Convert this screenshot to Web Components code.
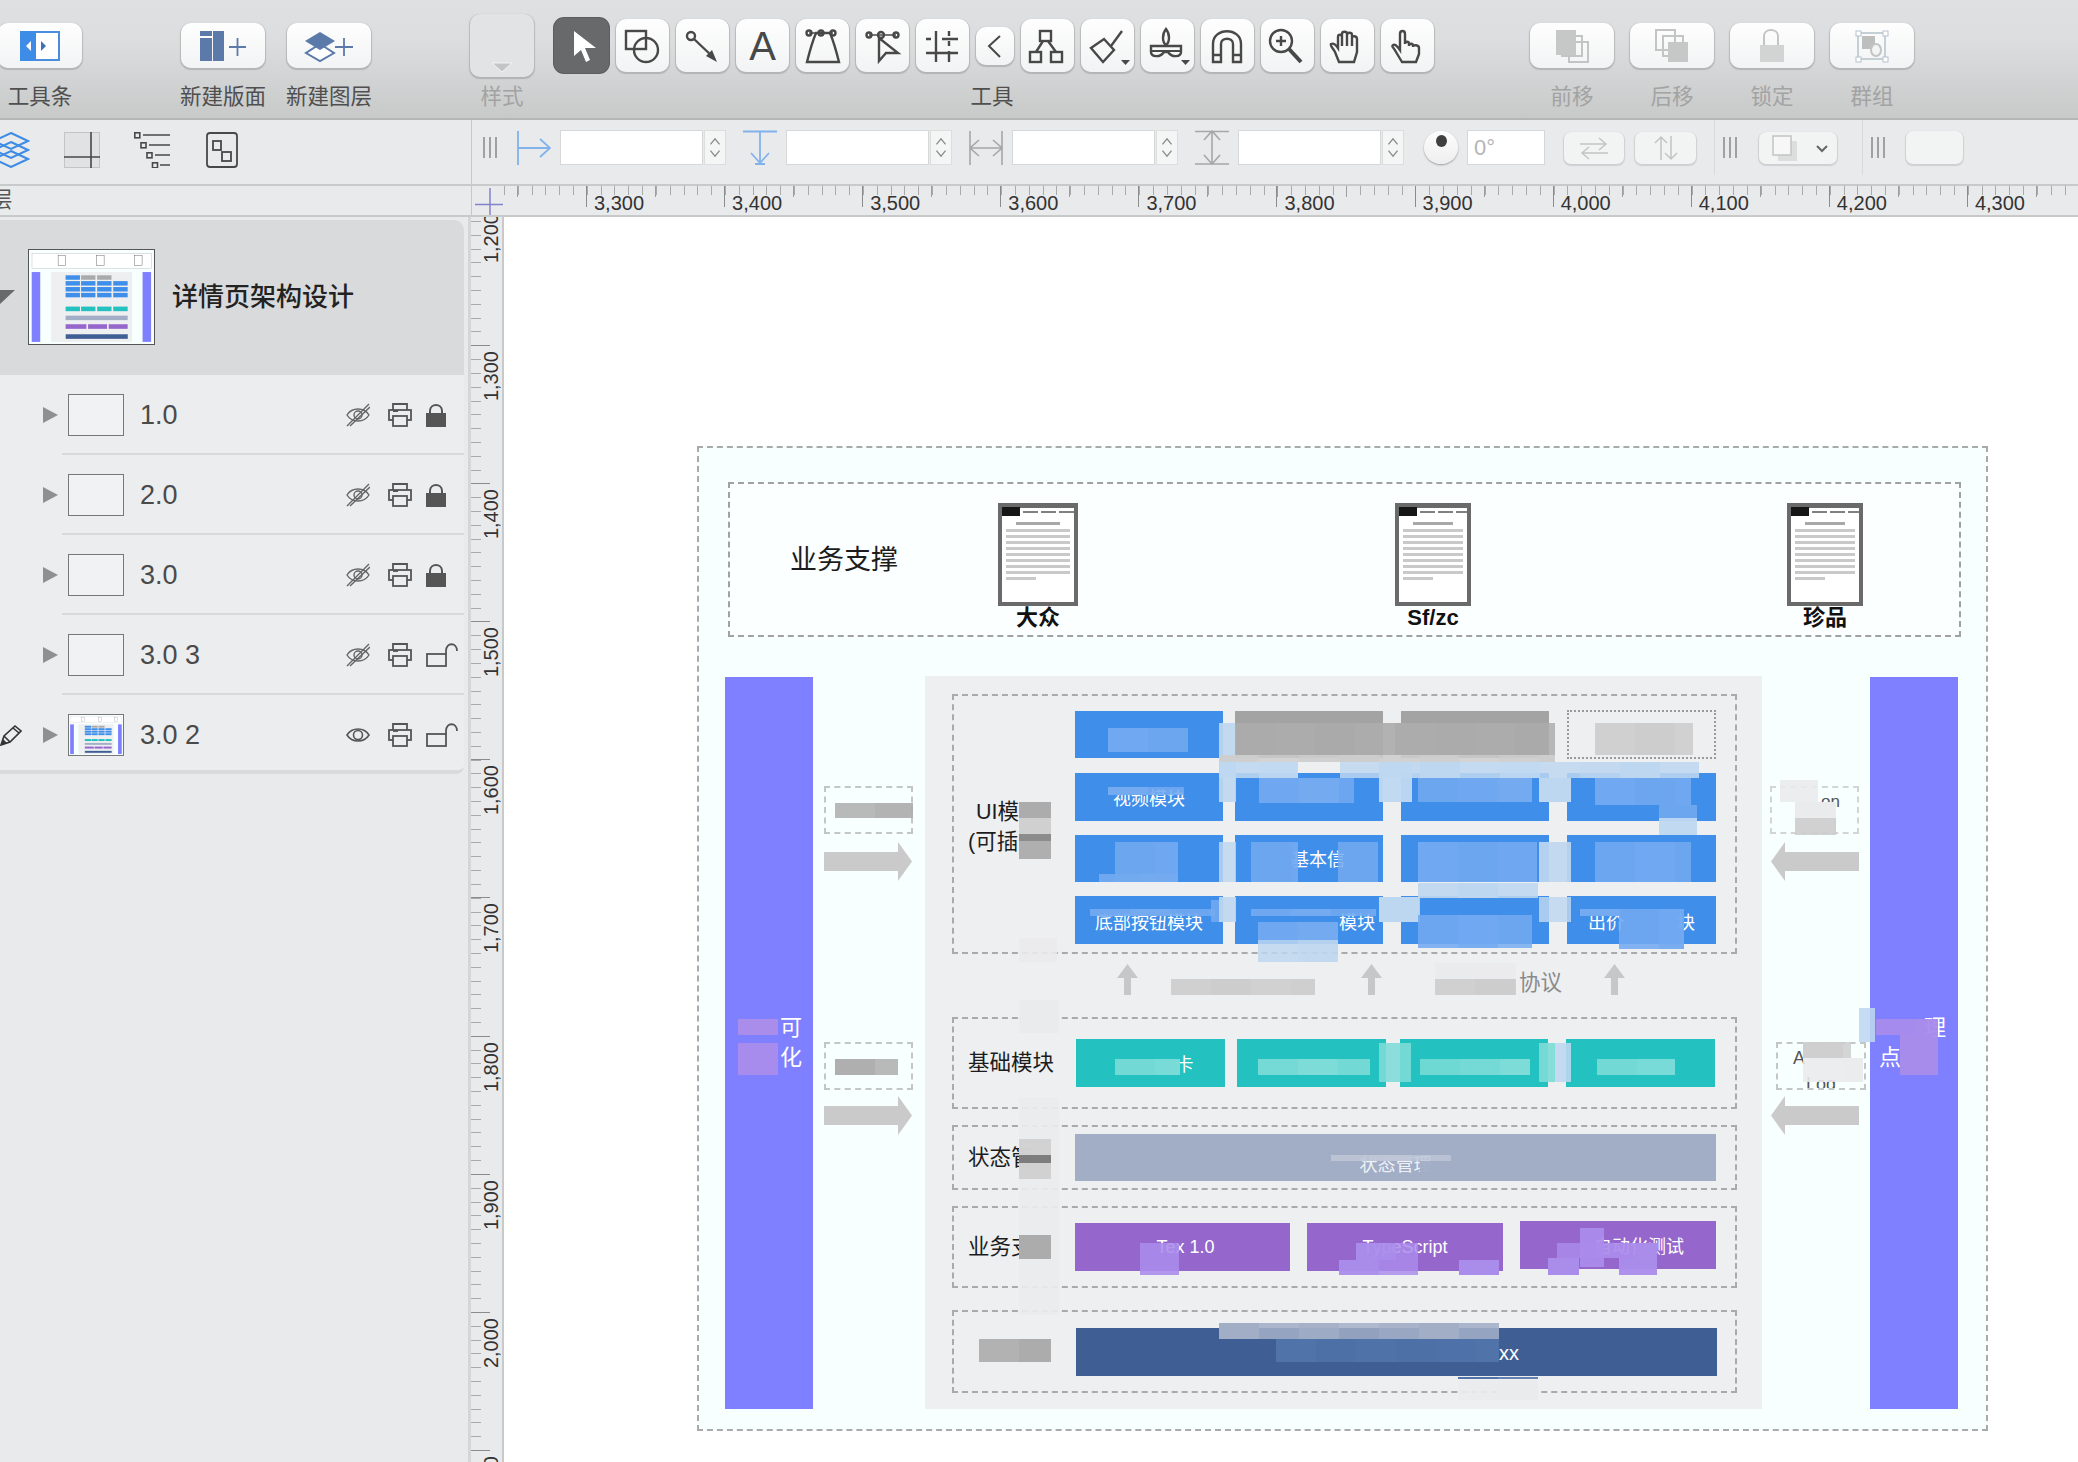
<!DOCTYPE html>
<html>
<head>
<meta charset="utf-8">
<title>架构设计</title>
<style>
  html, body { margin: 0; padding: 0; width: 2078px; height: 1462px; overflow: hidden; background: #fff; }
  body { font-family: "Liberation Sans", "Noto Sans CJK SC", sans-serif; }
</style>
</head>
<body>
<app-window></app-window>
<script>
const FONT = `"Liberation Sans", "Noto Sans CJK SC", sans-serif`;
const INK = 'fill="none" stroke="#484848" stroke-width="2.4"';
const PALE = 'fill="none" stroke="#c3c4c4" stroke-width="2"';

function icon(box, body, w, h) {
    return `<svg xmlns="http://www.w3.org/2000/svg" viewBox="${box}" width="${w}" height="${h}" style="display:block">${body}</svg>`;
}

function thumbnail(w, h) {
    let cells = '';
    const blue = [[378, 148], [538, 148], [704, 148], [870, 149]];
    [265, 326, 388, 449].forEach((y, r) => blue.forEach(([x, cw], c) => {
        const fill = r === 0 && (c === 1 || c === 2) ? '#aaa' : r === 0 && c === 3 ? '#eee' : '#3f8ee9';
        cells += `<rect x="${x}" y="${y}" width="${cw}" height="47" fill="${fill}"/>`;
        if (r === 0) cells += `<rect x="${x}" y="593" width="${cw}" height="48" fill="#24c1c1"/>`;
    }));
    [0, 397, 789].forEach((x) => {
        cells += `<rect x="${301 + x}" y="57" width="78" height="103" fill="#fff" stroke="#666" stroke-width="5"/>`;
    });
    return `<svg xmlns="http://www.w3.org/2000/svg" viewBox="0 0 1291 985" width="${w}" height="${h}" preserveAspectRatio="none" style="display:block">
        <rect width="1291" height="985" fill="#f7ffff"/>
        <rect x="31" y="36" width="1233" height="155" fill="#fff" stroke="#999" stroke-width="3"/>
        <rect x="28" y="231" width="88" height="732" fill="#7f80ff"/>
        <rect x="1173" y="231" width="88" height="732" fill="#7f80ff"/>
        <rect x="228" y="230" width="837" height="733" fill="#eeeff1"/>
        <rect x="378" y="688" width="641" height="47" fill="#a2aec6"/>
        <rect x="378" y="778" width="215" height="48" fill="#9566cc"/>
        <rect x="610" y="778" width="196" height="48" fill="#9566cc"/>
        <rect x="823" y="778" width="196" height="48" fill="#9566cc"/>
        <rect x="379" y="883" width="641" height="48" fill="#3f5e94"/>
        ${cells}</svg>`;
}

class ToolGroup extends HTMLElement {
    constructor() {
        super();
        this._shadowRoot = this.attachShadow({ mode: 'open' });
    }

    connectedCallback() {
        const muted = this.hasAttribute('muted');
        this._shadowRoot.innerHTML = `
            <style>
                :host { display: flex; flex-direction: column; align-items: center; flex: none; padding-top: 4px; }
                .btns { height: 83px; display: flex; align-items: center; gap: 7px; }
                .label { font-size: 21.5px; line-height: 20px; white-space: nowrap; margin: 0 -10px; color: ${muted ? '#a2a3a3' : '#4f4f4f'}; }
            </style>
            <div class="btns"><slot></slot></div>
            <div class="label" style="${this.getAttribute('label-style') || ''}">${this.getAttribute('label')}</div>`;
    }
}

class ToolButton extends HTMLElement {
    constructor() {
        super();
        this._shadowRoot = this.attachShadow({ mode: 'open' });
    }

    connectedCallback() {
        const w = this.getAttribute('w') || 53;
        const h = this.getAttribute('h') || 53;
        const state = this.getAttribute('state');
        const bg = state === 'on' ? '#68696b' : state === 'ghost' ? '#e2e3e4'
            : 'linear-gradient(#fefefe, #f2f3f4)';
        const shadow = state === 'on' ? '0 0 0 1px #5c5d5f' : '0 1px 1px 1px rgba(120,120,120,.35)';
        this._shadowRoot.innerHTML = `
            <style>
                :host { display: flex; flex: none; width: ${w}px; height: ${h}px; box-sizing: border-box; border-radius: 10px;
                    background: ${bg}; box-shadow: ${shadow}; align-items: center; justify-content: center; overflow: hidden; }
            </style>
            <slot></slot>`;
    }
}

class AppToolbar extends HTMLElement {
    constructor() {
        super();
        this._shadowRoot = this.attachShadow({ mode: 'open' });
    }

    connectedCallback() {
        this._shadowRoot.innerHTML = `
            <style>
                :host { display: flex; height: 120px; box-sizing: border-box; border-bottom: 2px solid #b4b5b5;
                    background: linear-gradient(#dfe0e1, #dcddde 35%, #c8c9c9); font-family: ${FONT}; }
                .letter { font-size: 40px; line-height: 40px; color: #484848; font-weight: 400; }
            </style>
            <tool-group label="工具条" style="margin-left:-2px">
                <tool-button w="84" h="45">${icon('-2 23 84 45', `
                    <rect x="21" y="32" width="38" height="28" fill="#fff" stroke="#4a8ddc" stroke-width="2"/>
                    <rect x="20" y="31" width="16" height="30" fill="#3d8ce6"/>
                    <path d="M31 41 l-5 5 5 5z" fill="#fff"/><path d="M41 41 l5 5 -5 5z" fill="#3d72b8"/>`, 84, 45)}</tool-button>
            </tool-group>
            <tool-group label="新建版面" style="margin-left:99px">
                <tool-button w="84" h="45">${icon('181 23 84 45', `
                    <rect x="200" y="31" width="12" height="5" fill="#5b7aa9"/><rect x="200" y="38" width="12" height="23" fill="#5b7aa9"/>
                    <rect x="213" y="31" width="11" height="30" fill="#5b7aa9"/>
                    <path d="M237.500 38 V56 M229 47 H246" stroke="#5b7aa9" stroke-width="1.8"/>`, 84, 45)}</tool-button>
            </tool-group>
            <tool-group label="新建图层" style="margin-left:22px">
                <tool-button w="84" h="45">${icon('287 23 84 45', `
                    <path d="M320 44 L334 53 L320 61 L306 53Z" fill="#fff" stroke="#5b7aa9" stroke-width="2"/>
                    <path d="M320 32 L335 41 L320 50 L305 41Z" fill="#5b7aa9"/>
                    <path d="M344 38 V56 M335 47 H353" stroke="#5b7aa9" stroke-width="1.8"/>`, 84, 45)}</tool-button>
            </tool-group>
            <tool-group label="样式" muted style="margin-left:99px">
                <tool-button w="64" h="63" state="ghost">${icon('470 14 64 63', `
                    <path d="M492 63 h20 l-10 9z" fill="#c3c4c4" stroke="#f4f4f4"/>`, 64, 63)}</tool-button>
            </tool-group>
            <tool-group label="工具" label-style="margin-right:-6px" style="margin-left:20px">
                <tool-button w="55" h="55" state="on">${icon('554 18 55 55', `
                    <path d="M574 31 V56 L581 50 L586 62 L590 60 L585 48 L596 48Z" fill="#fff"/>`, 55, 55)}</tool-button>
                <tool-button>${icon('616 19 53 53', `
                    <rect x="626" y="31" width="20" height="18" ${INK}/><ellipse cx="646" cy="50" rx="12" ry="12" ${INK}/>`, 53, 53)}</tool-button>
                <tool-button>${icon('676 19 53 53', `
                    <circle cx="691" cy="36" r="4" ${INK}/><path d="M694 39 L713 57" ${INK}/><path d="M717 62 L706 56 L712 50Z" fill="#484848"/>`, 53, 53)}</tool-button>
                <tool-button><span class="letter">A</span></tool-button>
                <tool-button>${icon('796 19 53 53', `
                    <path d="M807 62 C810 50 813 40 816 33 H830 C833 40 836 50 839 62Z" ${INK}/>
                    <path d="M809 33 H833" stroke="#484848" stroke-width="1.6"/>
                    <circle cx="809" cy="33" r="2.5" ${INK}/><circle cx="821" cy="33" r="2.5" ${INK}/><circle cx="833" cy="33" r="2.5" ${INK}/>`, 53, 53)}</tool-button>
                <tool-button>${icon('856 19 53 53', `
                    <path d="M869 35 H896" stroke="#484848" stroke-width="1.6"/>
                    <circle cx="869" cy="35" r="2.5" ${INK}/><circle cx="881" cy="35" r="3" ${INK}/><circle cx="896" cy="35" r="2.5" ${INK}/>
                    <path d="M879 38 V61 L886 53 H898Z" ${INK}/>`, 53, 53)}</tool-button>
                <tool-button>${icon('916 19 53 53', `
                    <path d="M936 31 V62 M949 31 V36 M949 41 V46 M949 51 V62 M926 39 H931 M942 39 H958 M926 53 H958" ${INK}/>`, 53, 53)}</tool-button>
                <tool-button w="38" h="38">${icon('976 27 38 38', `
                    <path d="M1000 36 L989 46 L1000 57" fill="none" stroke="#484848" stroke-width="2"/>`, 38, 38)}</tool-button>
                <tool-button>${icon('1021 19 53 53', `
                    <rect x="1040" y="31" width="11" height="10" ${INK}/><rect x="1030" y="52" width="11" height="10" ${INK}/><rect x="1051" y="52" width="11" height="10" ${INK}/>
                    <path d="M1043 41 L1036 52 M1048 41 L1056 52" ${INK}/>`, 53, 53)}</tool-button>
                <tool-button>${icon('1081 19 53 53', `
                    <path d="M1122 31 L1111 46" ${INK}/><path d="M1091 48 L1104 39 L1114 50 L1103 62Z" ${INK}/>
                    <path d="M1121 60 H1130 L1125.500 65Z" fill="#484848"/>`, 53, 53)}</tool-button>
                <tool-button>${icon('1141 19 53 53', `
                    <path d="M1166 29 C1170 34 1170 42 1166 45 C1162 42 1162 34 1166 29Z" ${INK}/>
                    <path d="M1151 46 H1181 V52 C1181 57 1172 58 1168 52 H1164 C1160 58 1151 57 1151 52Z" ${INK}/><path d="M1151 51 H1181" stroke="#484848" stroke-width="2"/>
                    <path d="M1181 60 H1190 L1185.500 65Z" fill="#484848"/>`, 53, 53)}</tool-button>
                <tool-button>${icon('1201 19 53 53', `
                    <path d="M1213 62 V44 C1213 27 1241 27 1241 44 V62 H1233 V44 C1233 37 1221 37 1221 44 V62Z M1213 55 H1221 M1233 55 H1241" ${INK}/>`, 53, 53)}</tool-button>
                <tool-button>${icon('1261 19 53 53', `
                    <ellipse cx="1281" cy="41" rx="11" ry="11" ${INK}/><path d="M1281 36 V46 M1276 41 H1286" ${INK}/>
                    <path d="M1289 49 L1301 62" fill="none" stroke="#484848" stroke-width="4"/>`, 53, 53)}</tool-button>
                <tool-button>${icon('1321 19 53 53', `
                    <path d="M1339 62 L1335 52 C1333 48 1330 46 1331 44 C1333 43 1336 45 1338 48 V37 C1338 34 1342 34 1342 37 V34 C1342 31 1347 31 1347 34 V35 C1347 32 1352 32 1352 35 V38 C1352 35 1357 36 1357 39 V52 L1354 62Z M1342 37 V46 M1347 35 V46 M1352 38 V46" ${INK}/>`, 53, 53)}</tool-button>
                <tool-button>${icon('1381 19 53 53', `
                    <path d="M1402 62 L1396 52 C1394 48 1391 46 1393 45 C1395 44 1398 47 1400 50 V34 C1400 30 1405 30 1405 34 V44 C1405 41 1409 41 1409 44 V46 C1409 43 1413 43 1413 46 V47 C1413 44 1419 45 1419 48 V54 L1416 62Z" ${INK}/>`, 53, 53)}</tool-button>
            </tool-group>
            <tool-group label="前移" muted style="margin-left:96px">
                <tool-button w="84" h="45">${icon('1530 23 84 45', `
                    <rect x="1569" y="42" width="19" height="20" ${PALE}/><rect x="1562" y="36" width="20" height="20" ${PALE}/>
                    <rect x="1556" y="30" width="20" height="25" fill="#c6c7c7"/>`, 84, 45)}</tool-button>
            </tool-group>
            <tool-group label="后移" muted style="margin-left:16px">
                <tool-button w="84" h="45">${icon('1630 23 84 45', `
                    <rect x="1656" y="30" width="19" height="20" ${PALE}/><rect x="1663" y="36" width="20" height="20" ${PALE}/>
                    <rect x="1668" y="42" width="20" height="20" fill="#c6c7c7"/>`, 84, 45)}</tool-button>
            </tool-group>
            <tool-group label="锁定" muted style="margin-left:16px">
                <tool-button w="84" h="45">${icon('1730 23 84 45', `
                    <path d="M1764 46 V36 C1764 28 1778 28 1778 36 V46" ${PALE}/><rect x="1760" y="45" width="24" height="17" fill="#d2d3d3"/>`, 84, 45)}</tool-button>
            </tool-group>
            <tool-group label="群组" muted style="margin-left:16px">
                <tool-button w="84" h="45">${icon('1830 23 84 45', `
                    <rect x="1858" y="33" width="27" height="26" fill="none" stroke="#c5cfd6" stroke-width="2"/>
                    <rect x="1856" y="31" width="5" height="5" fill="#fff" stroke="#b5c2cc"/><rect x="1883" y="31" width="5" height="5" fill="#fff" stroke="#b5c2cc"/>
                    <rect x="1856" y="57" width="5" height="5" fill="#fff" stroke="#b5c2cc"/><rect x="1883" y="57" width="5" height="5" fill="#fff" stroke="#b5c2cc"/>
                    <rect x="1862" y="36" width="13" height="13" fill="#bdbebe"/><ellipse cx="1876" cy="50" rx="5" ry="6" fill="#f4f4f4" stroke="#c3c4c4" stroke-width="2"/>`, 84, 45)}</tool-button>
            </tool-group>`;
    }
}

class NumField extends HTMLElement {
    constructor() {
        super();
        this._shadowRoot = this.attachShadow({ mode: 'open' });
    }

    connectedCallback() {
        this._shadowRoot.innerHTML = `
            <style>
                :host { display: flex; flex: none; align-items: center; height: 35px; margin-right: 17px; }
                .icon { width: 34px; height: 35px; margin-right: 9px; }
                .box { width: 143px; height: 35px; box-sizing: border-box; background: #fff; border: 1px solid #d6d7d8; margin-right: 1px; }
                .step { width: 22px; height: 35px; box-sizing: border-box; background: #f4f5f5; border: 1px solid #dcdddd; }
            </style>
            <div class="icon"><slot></slot></div>
            <div class="box"></div>
            <div class="step">${icon('0 0 22 35', `<path d="M6 14 L11 8 L16 14 M6 21 L11 27 L16 21" fill="none" stroke="#8a8b8b" stroke-width="1.4"/>`, 20, 33)}</div>`;
    }
}

class FormatBar extends HTMLElement {
    constructor() {
        super();
        this._shadowRoot = this.attachShadow({ mode: 'open' });
    }

    connectedCallback() {
        const grips = `<svg width="14" height="21" style="display:block;flex:none"><path d="M1 0 V21 M7 0 V21 M13 0 V21" stroke="#6f7070" stroke-width="1.2"/></svg>`;
        this._shadowRoot.innerHTML = `
            <style>
                :host { display: flex; height: 66px; box-sizing: border-box; background: #e9eaeb; border-bottom: 2px solid #c8c9c9; font-family: ${FONT}; }
                .tabs { width: 472px; flex: none; display: flex; align-items: flex-start; padding-top: 12px; box-sizing: border-box; border-right: 1px solid #c6c7c7; }
                .tabs > * { flex: none; }
                .tools { display: flex; align-items: center; height: 35px; margin-top: 10px; padding-left: 11px; flex: 1; }
                .tools > * { flex: none; }
                .rot { width: 34px; height: 33px; border-radius: 50%; background: linear-gradient(#fdfdfd, #eeeeee); box-shadow: 0 1px 2px rgba(0,0,0,.35); margin-right: 9px; display: flex; justify-content: center; }
                .rot i { width: 11px; height: 12px; margin-top: 4px; border-radius: 50%; background: #3f3f3f; }
                .deg { width: 78px; height: 35px; box-sizing: border-box; background: #fff; border: 1px solid #d6d7d8; color: #b4b5b5; font-size: 22px; line-height: 33px; padding-left: 6px; margin-right: 19px; }
                .btn { height: 32px; box-sizing: border-box; border-radius: 7px; background: #f2f3f3; box-shadow: 0 1px 1px 1px rgba(150,150,150,.3); display: flex; align-items: center; justify-content: center; }
                .div { width: 1px; height: 55px; background: #d9dada; }
            </style>
            <div class="tabs">
                ${icon('-7 132 37 36', `<g fill="none" stroke="#3d8ce6" stroke-width="2"><path d="M11 133 L28 141 L11 149 L-6 141Z"/><path d="M11 142 L28 150 L11 158 L-6 150Z"/><path d="M11 151 L28 159 L11 167 L-6 159Z"/></g>`, 37, 36).replace('display:block', 'display:block;margin-left:-7px')}
                ${icon('64 132 36 36', `<rect x="64.500" y="132.500" width="35" height="35" fill="#e1e2e3" stroke="#c4c5c6"/><path d="M91 132 V168 M64 157 H100" stroke="#484848" stroke-width="1.6"/>`, 36, 36).replace('display:block', 'display:block;margin-left:34px')}
                ${icon('134 132 36 36', `<g fill="none" stroke="#484848" stroke-width="1.6"><rect x="134.800" y="132.800" width="5" height="5"/><rect x="141" y="142.800" width="5" height="5"/><rect x="147" y="152.800" width="5" height="5"/><rect x="152.500" y="162.800" width="5" height="5"/><path d="M143 135 H170 M149 145 H170 M155 155 H170 M160 165 H170"/></g>`, 36, 36).replace('display:block', 'display:block;margin-left:34px')}
                ${icon('206 132 32 36', `<g fill="none" stroke="#484848" stroke-width="1.8"><rect x="207" y="133" width="30" height="34" rx="3"/><rect x="213" y="141" width="8" height="9"/><rect x="222" y="152" width="9" height="9"/></g>`, 32, 36).replace('display:block', 'display:block;margin-left:36px')}
            </div>
            <div class="tools">
                <span style="margin-right:20px">${grips}</span>
                <num-field>${icon('516 130 34 35', `<path d="M517 131 V165 M517 148 H549 M539 139 L549 148 L539 157" fill="none" stroke="#82b2ec" stroke-width="1.8"/>`, 34, 35)}</num-field>
                <num-field>${icon('742 130 34 35', `<path d="M742 131.500 H776 M759 131 V163 M750 153 L759 163 L768 153 M754 164 H764" fill="none" stroke="#82b2ec" stroke-width="1.8"/>`, 34, 35)}</num-field>
                <num-field>${icon('968 130 34 35', `<path d="M969 131 V165 M1001 131 V165 M969 148 H1001 M978 140 L969 148 L978 156 M992 140 L1001 148 L992 156" fill="none" stroke="#a6a7a7" stroke-width="1.6"/>`, 34, 35)}</num-field>
                <num-field>${icon('1194 130 34 35', `<path d="M1194 131.500 H1228 M1194 164 H1228 M1211 131 V164 M1203 140 L1211 131 L1219 140 M1203 155 L1211 164 L1219 155" fill="none" stroke="#a6a7a7" stroke-width="1.6"/>`, 34, 35)}</num-field>
                <div class="rot" style="margin-left:3px"><i></i></div>
                <div class="deg">0°</div>
                <div class="btn" style="width:60px;margin-right:11px">${icon('0 0 40 26', `<path d="M6 9 H32 M25 3 L32 9 L25 15 M34 18 H8 M15 12 L8 18 L15 24" fill="none" stroke="#c3c4c4" stroke-width="1.5"/>`, 40, 26)}</div>
                <div class="btn" style="width:61px;margin-right:18px">${icon('0 0 34 26', `<path d="M12 25 V2 M6 8 L12 2 L18 8 M22 1 V24 M16 18 L22 24 L28 18" fill="none" stroke="#c3c4c4" stroke-width="1.5"/>`, 34, 26)}</div>
                <div class="div"></div>
                <span style="margin:0 22px 0 8px">${grips}</span>
                <div class="btn" style="width:78px;margin-right:25px">${icon('0 0 78 32', `<rect x="19" y="9" width="19" height="20" fill="#dcdddd"/><rect x="14" y="4" width="18" height="19" fill="#f7f7f7" stroke="#c3c4c4" stroke-width="1.500"/><path d="M58 14 L63 19 L68 14" fill="none" stroke="#666" stroke-width="2"/>`, 78, 32)}</div>
                <div class="div"></div>
                <span style="margin:0 21px 0 8px">${grips}</span>
                <div class="btn" style="width:57px;height:33px"></div>
            </div>`;
    }
}

class RulerRow extends HTMLElement {
    constructor() {
        super();
        this._shadowRoot = this.attachShadow({ mode: 'open' });
    }

    connectedCallback() {
        const marks = ['3,300', '3,400', '3,500', '3,600', '3,700', '3,800', '3,900', '4,000', '4,100', '4,200', '4,300']
            .map((t) => `<div class="seg"><span>${t}</span></div>`).join('');
        this._shadowRoot.innerHTML = `
            <style>
                :host { display: flex; height: 31px; box-sizing: border-box; background: #e9eaeb; border-bottom: 2px solid #c8c9c9; font-family: ${FONT}; overflow: hidden; }
                .title { width: 472px; flex: none; box-sizing: border-box; font-size: 21.5px; line-height: 29px; color: #555; overflow: hidden; border-right: 1px solid #c6c7c7; }
                .title span { display: block; margin-left: -9px; }
                .corner { width: 32px; flex: none; }
                .track { flex: 1; display: flex; overflow: hidden; padding-left: 82px;
                    background:
                        repeating-linear-gradient(90deg, #9d9e9e 0 1px, transparent 1px 69.05px) 13px 0 / 100% 11px no-repeat,
                        repeating-linear-gradient(90deg, #a9aaaa 0 1px, transparent 1px 13.81px) 0 0 / 100% 9px no-repeat; }
                .seg { width: 138.1px; height: 21px; flex: none; box-sizing: border-box; border-left: 1px solid #8a8b8b; padding-left: 7px; }
                .seg span { display: block; font-size: 20px; line-height: 20px; margin-top: 7px; color: #333; white-space: nowrap; }
            </style>
            <div class="title"><span>层</span></div>
            <div class="corner">${icon('472 186 32 29', `<path d="M475 204.500 H503" stroke="#8183cc" stroke-width="1.5"/><path d="M490 188 V215" stroke="#8183cc" stroke-width="1.5"/>`, 32, 29)}</div>
            <div class="track">${marks}</div>`;
    }
}

class LayerRow extends HTMLElement {
    constructor() {
        super();
        this._shadowRoot = this.attachShadow({ mode: 'open' });
    }

    connectedCallback() {
        const visible = this.hasAttribute('visible');
        const locked = this.hasAttribute('locked');
        const last = this.hasAttribute('last');
        const eye = icon('0 0 24 24', visible
            ? `<path d="M1 12 C6 4 18 4 23 12 C18 20 6 20 1 12Z" fill="none" stroke="#555" stroke-width="1.6"/><ellipse cx="12" cy="12" rx="4.500" ry="4.500" fill="none" stroke="#555" stroke-width="1.600"/>`
            : `<path d="M1 12 C6 4 18 4 23 12 C18 20 6 20 1 12Z" fill="none" stroke="#666" stroke-width="1.4"/><ellipse cx="12" cy="12" rx="4" ry="4" fill="none" stroke="#666" stroke-width="1.4"/><path d="M1 23 L23 1 M4 23 L24 4" stroke="#666" stroke-width="1.400"/>`, 24, 24);
        const printer = icon('0 0 24 24', `<g fill="none" stroke="#555" stroke-width="1.8"><path d="M5 7 V1 H19 V7"/><rect x="1" y="7" width="22" height="10"/><rect x="5" y="13" width="14" height="10" fill="#ecedef"/><path d="M5 8 H10"/></g>`, 24, 24);
        const lock = locked
            ? icon('0 0 20 24', `<path d="M4 12 V8 C4 0 16 0 16 8 V12" fill="none" stroke="#555" stroke-width="2"/><rect y="10" width="20" height="14" fill="#555"/>`, 20, 24)
            : icon('0 0 32 24', `<rect x="1" y="11" width="19" height="12" fill="none" stroke="#555" stroke-width="1.8"/><path d="M20 11 V8 C20 -1 31 -1 31 8" fill="none" stroke="#555" stroke-width="1.8"/>`, 32, 24);
        this._shadowRoot.innerHTML = `
            <style>
                :host { display: flex; align-items: center; height: ${last ? 75 : 80}px; box-sizing: border-box; width: 464px; background: #ecedef;
                    ${last ? 'padding-top: 5px;' : 'background: linear-gradient(#d8d9da, #d8d9da) 62px 100% / 402px 2px no-repeat, #ecedef;'} font-family: ${FONT}; }
                .pen { width: 43px; flex: none; }
                .tri { width: 0; height: 0; flex: none; border-left: 15px solid #8f9091; border-top: 8.500px solid transparent; border-bottom: 8.500px solid transparent; margin-right: 10px; }
                .thumb { width: 56px; height: 42px; flex: none; box-sizing: border-box; border: 1px solid #777; background: #f1f2f3; overflow: hidden; }
                .name { margin-left: 16px; font-size: 27px; color: #4a4a4a; white-space: pre; }
                .marks { margin-left: auto; width: 118px; flex: none; display: flex; align-items: center; gap: 18px; }
                .marks svg:last-child { margin-left: -4px; }
            </style>
            <div class="pen">${this.hasAttribute('editing') ? icon('0 0 22 22', `<path d="M1 21 L4 12 L15 2 L21 7 L10 18Z M4 12 L10 18 M13 4 L19 9" fill="none" stroke="#333" stroke-width="1.6"/><path d="M1 21 L3 15 L7 19Z" fill="#333"/>`, 22, 22) : ''}</div>
            <div class="tri"></div>
            <div class="thumb">${visible ? thumbnail(54, 40) : ''}</div>
            <div class="name">${this.getAttribute('name')}</div>
            <div class="marks">${eye}${printer}${lock}</div>`;
    }
}

class LayerPanel extends HTMLElement {
    constructor() {
        super();
        this._shadowRoot = this.attachShadow({ mode: 'open' });
    }

    connectedCallback() {
        this._shadowRoot.innerHTML = `
            <style>
                :host { display: block; width: 471px; flex: none; box-sizing: border-box; background: #e9eaec; border-right: 3px solid #d5d6d7; font-family: ${FONT}; overflow: hidden; }
                .head { width: 464px; height: 155px; margin-top: 3px; background: #d9dadc; border-radius: 0 10px 0 0; display: flex; align-items: center; box-sizing: border-box; padding-bottom: 2px; }
                .tri { width: 0; height: 0; flex: none; border-top: 14px solid #69696b; border-left: 15px solid transparent; border-right: 15px solid transparent; margin-left: -15px; margin-right: 13px; }
                .big { width: 127px; height: 96px; flex: none; box-sizing: border-box; border: 1px solid #555; }
                .title { margin-left: 17px; padding-bottom: 4px; font-size: 26px; font-weight: 500; color: #222; white-space: nowrap; }
                .rows { width: 464px; border-bottom: 4px solid #d9dadb; border-radius: 0 0 8px 0; overflow: hidden; }
            </style>
            <div class="head">
                <div class="tri"></div>
                <div class="big">${thumbnail(125, 94)}</div>
                <div class="title">详情页架构设计</div>
            </div>
            <div class="rows">
                <layer-row name="1.0" locked></layer-row>
                <layer-row name="2.0" locked></layer-row>
                <layer-row name="3.0" locked></layer-row>
                <layer-row name="3.0 3"></layer-row>
                <layer-row name="3.0 2" visible editing last></layer-row>
            </div>`;
    }
}

class SideRuler extends HTMLElement {
    constructor() {
        super();
        this._shadowRoot = this.attachShadow({ mode: 'open' });
    }

    connectedCallback() {
        const marks = ['1,200', '1,300', '1,400', '1,500', '1,600', '1,700', '1,800', '1,900', '2,000', '2,100']
            .map((t) => `<div class="seg"><span>${t}</span></div>`).join('');
        this._shadowRoot.innerHTML = `
            <style>
                :host { display: block; width: 33px; flex: none; box-sizing: border-box; overflow: hidden; background: #e9eaeb; border-right: 2px solid #c8c9c9; font-family: ${FONT}; }
                .track { height: 100%; overflow: hidden; box-sizing: border-box;
                    background: repeating-linear-gradient(180deg, #a9aaaa 0 1px, transparent 1px 13.81px) 0 4px / 10px 100% no-repeat; }
                .seg { height: 138.1px; width: 31px; box-sizing: border-box; background: linear-gradient(#8a8b8b, #8a8b8b) 0 0 / 19px 1px no-repeat; padding: 6px 0 0 13px; }
                .seg:first-child { margin-top: -10px; }
                .seg span { display: block; writing-mode: vertical-rl; transform: rotate(180deg); font-size: 20px; line-height: 15px; width: 15px; color: #333; white-space: nowrap; }
            </style>
            <div class="track">${marks}</div>`;
    }
}

class DocCard extends HTMLElement {
    constructor() {
        super();
        this._shadowRoot = this.attachShadow({ mode: 'open' });
    }

    connectedCallback() {
        const w = this.getAttribute('w') || 76;
        let lines = '';
        for (let i = 0; i < 8; i++) {
            lines += `<rect x="8" y="${26 + i * 6}" width="${w - 16}" height="3" fill="#c9c9c9"/>`;
        }
        this._shadowRoot.innerHTML = `
            <style>
                :host { display: flex; flex-direction: column; align-items: center; flex: none; width: ${w}px; font-family: ${FONT}; }
                .name { font-size: 22px; line-height: 24px; font-weight: 700; color: #111; white-space: nowrap; }
            </style>
            <svg xmlns="http://www.w3.org/2000/svg" width="${w}" height="103" viewBox="0 0 ${w} 103" style="display:block">
                <rect x="2" y="2" width="${w - 4}" height="99" fill="#fff" stroke="#6a6a6a" stroke-width="4"/>
                <rect x="0" y="0" width="${w}" height="5" fill="#6a6a6a"/>
                <rect x="4" y="4" width="18" height="9" fill="#161616"/>
                <path d="M25 9 H${w - 4}" stroke="#808080" stroke-width="2" stroke-dasharray="15 3"/>
                <rect x="18" y="19" width="${w - 36}" height="3" fill="#a8a8a8"/>
                ${lines}
                <rect x="8" y="${26 + 8 * 6}" width="30" height="3" fill="#c9c9c9"/>
            </svg>
            <div class="name">${this.getAttribute('name')}</div>`;
    }
}

class SideNote extends HTMLElement {
    constructor() {
        super();
        this._shadowRoot = this.attachShadow({ mode: 'open' });
    }

    connectedCallback() {
        this._shadowRoot.innerHTML = `
            <style>
                :host { display: block; width: 89px; height: 48px; box-sizing: border-box; border: 2px dashed #c4c5c5; font-family: ${FONT}; font-size: 17px; line-height: 17px; color: #555; white-space: nowrap; overflow: hidden; }
            </style>
            <slot></slot>`;
    }
}

class FlowArrow extends HTMLElement {
    constructor() {
        super();
        this._shadowRoot = this.attachShadow({ mode: 'open' });
    }

    connectedCallback() {
        const path = this.getAttribute('dir') === 'left'
            ? 'M0 19.500 L14 0 V10 H88 V29 H14 V39Z'
            : 'M88 19.500 L74 0 V10 H0 V29 H74 V39Z';
        this._shadowRoot.innerHTML = `
            <style>:host { display: block; width: 88px; height: 39px; }</style>
            ${icon('0 0 88 39', `<path d="${path}" fill="#c9cac9"/>`, 88, 39)}`;
    }
}

class UpArrow extends HTMLElement {
    constructor() {
        super();
        this._shadowRoot = this.attachShadow({ mode: 'open' });
    }

    connectedCallback() {
        this._shadowRoot.innerHTML = `
            <style>:host { display: block; width: 21px; height: 31px; flex: none; }</style>
            ${icon('0 0 21 31', `<path d="M10.500 0 L21 14 H14 V31 H7 V14 H0Z" fill="#c6c7c8"/>`, 21, 31)}`;
    }
}

class ArchLayer extends HTMLElement {
    constructor() {
        super();
        this._shadowRoot = this.attachShadow({ mode: 'open' });
    }

    connectedCallback() {
        this._shadowRoot.innerHTML = `
            <style>
                :host { display: flex; align-items: center; width: 785px; height: ${this.getAttribute('h')}px; box-sizing: border-box; flex: none;
                    border: 2px dashed #a9aaaa; font-family: ${FONT}; }
                .label { width: 121px; flex: none; box-sizing: border-box; padding-left: 14px; font-size: 21.5px; line-height: 30px; color: #1c1c1c; white-space: nowrap; }
                .cells { display: flex; flex-wrap: wrap; width: 641px; }
            </style>
            <div class="label"><slot name="label"></slot></div>
            <div class="cells"><slot></slot></div>`;
    }
}

class ArchCell extends HTMLElement {
    constructor() {
        super();
        this._shadowRoot = this.attachShadow({ mode: 'open' });
    }

    connectedCallback() {
        this._shadowRoot.innerHTML = `
            <style>
                :host { display: flex; align-items: center; justify-content: center; box-sizing: border-box; flex: none; height: 48px;
                    background: var(--cell, #3f8ee9); color: #fff; font-family: ${FONT}; font-size: 18px; white-space: nowrap; }
            </style>
            <slot></slot>`;
    }
}

class MosaicLayer extends HTMLElement {
    constructor() {
        super();
        this._shadowRoot = this.attachShadow({ mode: 'open' });
    }

    connectedCallback() {
        const tones = {
            b: '115,170,240', p: '190,215,240', g: '172,172,172', h: '205,205,205', l: '234,235,237',
            t: '125,220,215', v: '170,140,235', s: '190,198,215', n: '80,115,170', k: '162,174,198', d: '120,120,120'
        };
        const patches = [
            [1108, 728, 80, 24, 'b'], [1219, 723, 17, 79, 'p'], [1235, 723, 320, 32, 'g'], [1219, 755, 336, 7, 'h'],
            [1219, 762, 79, 16, 'p'], [1340, 762, 359, 16, 'p'], [1259, 778, 95, 25, 'b'], [1108, 787, 76, 8, 'b'],
            [1379, 762, 33, 40, 'p'], [1418, 778, 114, 24, 'b'], [1539, 778, 32, 24, 'p'], [1595, 778, 96, 27, 'b'],
            [1659, 805, 38, 13, 'b'], [1659, 818, 38, 17, 'p'], [1595, 723, 98, 32, 'h'],
            [1115, 842, 63, 40, 'b'], [1099, 874, 79, 8, 'b'], [1219, 842, 17, 40, 'p'], [1251, 842, 47, 40, 'b'],
            [1338, 842, 40, 40, 'b'], [1418, 842, 119, 40, 'b'], [1539, 842, 32, 40, 'p'], [1595, 842, 96, 40, 'b'],
            [1418, 883, 120, 15, 'p'],
            [1090, 909, 125, 7, 'b'], [1211, 900, 11, 22, 'b'], [1219, 897, 17, 25, 'p'], [1251, 909, 125, 7, 'b'],
            [1258, 922, 80, 18, 'b'], [1258, 940, 80, 22, 'p'], [1379, 897, 41, 25, 'p'], [1418, 915, 114, 33, 'b'],
            [1539, 897, 32, 25, 'p'], [1580, 909, 104, 7, 'b'], [1619, 916, 65, 33, 'b'],
            [1019, 802, 32, 16, 'g'], [1019, 818, 32, 16, 'h'], [1019, 834, 32, 7, 'd'], [1019, 841, 32, 18, 'g'],
            [1019, 938, 38, 24, 'l'], [1019, 1000, 40, 33, 'l'], [1019, 1098, 40, 217, 'l'],
            [1019, 1139, 32, 16, 'h'], [1019, 1155, 32, 8, 'd'], [1019, 1163, 32, 16, 'h'], [1019, 1235, 32, 24, 'g'],
            [979, 1339, 72, 23, 'g'],
            [1171, 979, 144, 16, 'h'], [1435, 963, 81, 16, 'l'], [1435, 979, 81, 16, 'h'],
            [835, 803, 78, 15, 'g'], [835, 1059, 63, 16, 'g'], [1780, 780, 38, 22, 'l'], [1795, 802, 41, 16, 'l'], [1795, 818, 41, 17, 'h'],
            [1803, 1042, 48, 16, 'h'], [1803, 1058, 60, 24, 'l'],
            [738, 1019, 40, 16, 'v'], [738, 1043, 40, 32, 'v'], [1859, 1008, 16, 34, 'p'], [1876, 1019, 62, 16, 'v'], [1900, 1035, 38, 40, 'v'],
            [1115, 1059, 65, 16, 't'], [1258, 1059, 112, 16, 't'], [1379, 1043, 32, 39, 't'], [1420, 1059, 110, 16, 't'],
            [1539, 1043, 16, 39, 't'], [1555, 1043, 16, 39, 'p'], [1597, 1059, 78, 16, 't'],
            [1332, 1140, 119, 15, 'k'], [1331, 1155, 120, 6, 's'], [1420, 1161, 31, 19, 'k'],
            [1140, 1243, 39, 32, 'v'], [1339, 1260, 79, 15, 'v'], [1356, 1243, 62, 17, 'v'], [1459, 1260, 40, 15, 'v'],
            [1557, 1243, 100, 15, 'v'], [1548, 1258, 31, 17, 'v'], [1619, 1258, 38, 17, 'v'], [1580, 1228, 24, 39, 'v'],
            [1219, 1323, 280, 16, 'k'], [1276, 1339, 223, 23, 'n'], [1458, 1377, 80, 2, 'n'], [1458, 1380, 80, 20, 'l']
        ];
        const out = patches.map(([x, y, w, h, tone], n) => {
            let cells = '';
            for (let r = 0; r * 16 < h; r++) {
                for (let c = 0; c * 40 < w; c++) {
                    const alpha = 0.84 + ((x + n * 3 + r * 5 + c * 7) % 5) * 0.04;
                    cells += `<i style="left:${c * 40}px;top:${r * 16}px;background:rgba(${tones[tone]},${alpha.toFixed(2)})"></i>`;
                }
            }
            return `<div class="patch" style="left:${x - 504}px;top:${y - 217}px;width:${w}px;height:${h}px">${cells}</div>`;
        }).join('');
        this._shadowRoot.innerHTML = `
            <style>
                :host { position: absolute; left: 0; top: 0; right: 0; bottom: 0; pointer-events: none; }
                .patch { position: absolute; overflow: hidden; }
                i { position: absolute; width: 40px; height: 16px; }
            </style>
            ${out}`;
    }
}

class ArchDiagram extends HTMLElement {
    constructor() {
        super();
        this._shadowRoot = this.attachShadow({ mode: 'open' });
    }

    connectedCallback() {
        this._shadowRoot.innerHTML = `
            <style>
                :host { display: block; width: 1291px; height: 985px; box-sizing: border-box; flex: none; background: #f7ffff; border: 2px dashed #a9aaaa; padding-top: 34px; font-family: ${FONT}; }
                .support { display: flex; width: 1233px; height: 155px; margin-left: 29px; box-sizing: border-box; border: 2px dashed #a0a1a1; padding: 19px 0 0 60px; background: #fbffff; }
                .support .title { width: 110px; flex: none; font-size: 27px; line-height: 114px; height: 114px; color: #1c1c1c; white-space: nowrap; }
                .lane { display: flex; margin: 40px 0 0 26px; height: 732px; }
                .bar { width: 88px; flex: none; background: #7f80ff; color: #fff; font-size: 22px; line-height: 30px; box-sizing: border-box; padding-top: 336px; }
                .col { flex: none; }
                .col.l { width: 112px; padding-left: 11px; box-sizing: border-box; }
                .col.r { width: 108px; padding-left: 8px; box-sizing: border-box; }
                .panel { width: 837px; height: 733px; margin-top: -1px; flex: none; box-sizing: border-box; background: #eeeff1; padding: 18px 0 0 27px; display: flex; flex-direction: column; }
                .ups { display: flex; height: 63px; flex: none; padding-top: 10px; box-sizing: border-box; }
                .proto { width: 47px; flex: none; font-size: 21.5px; line-height: 38px; color: #8a8a8a; white-space: nowrap; }
                [slot=label] { display: block; }
                .sl { --cell: #a2aec6; }
                .tl { --cell: #24c1c1; }
                .pl { --cell: #9566cc; }
                .nv { --cell: #3f5e94; }
                .gr { --cell: #a3a3a3; }
                .dot { --cell: transparent; border: 2px dotted #9a9a9a; }
                arch-cell[data-g] { margin-top: 14px; }
            </style>
            <div class="support">
                <div class="title">业务支撑</div>
                <doc-card name="大众" w="80" style="margin-left:98px"></doc-card>
                <doc-card name="Sf/zc" w="76" style="margin-left:317px"></doc-card>
                <doc-card name="珍品" w="76" style="margin-left:316px"></doc-card>
            </div>
            <div class="lane">
                <div class="bar"><div style="padding-left:55px">可</div><div style="padding-left:55px">化</div></div>
                <div class="col l">
                    <side-note style="margin-top:109px"></side-note>
                    <flow-arrow style="margin-top:8px"></flow-arrow>
                    <side-note style="margin-top:161px"></side-note>
                    <flow-arrow style="margin-top:6px"></flow-arrow>
                </div>
                <div class="panel">
                    <arch-layer h="260" style="padding-top:6px">
                        <span slot="label" style="padding-left:8px">UI模</span>
                        <span slot="label">(可插</span>
                        <arch-cell style="width:148px;height:47px;margin-right:12px"></arch-cell>
                        <arch-cell class="gr" style="width:148px;height:47px;margin-right:18px"></arch-cell>
                        <arch-cell class="gr" style="width:148px;height:47px;margin-right:18px"></arch-cell>
                        <arch-cell class="dot" style="width:149px;height:49px;margin-top:-1px"></arch-cell>
                        <arch-cell data-g style="width:148px;margin-right:12px">视频模块</arch-cell>
                        <arch-cell data-g style="width:148px;margin-right:18px"></arch-cell>
                        <arch-cell data-g style="width:148px;margin-right:18px"></arch-cell>
                        <arch-cell data-g style="width:149px"></arch-cell>
                        <arch-cell data-g style="width:148px;height:47px;margin-right:12px"></arch-cell>
                        <arch-cell data-g style="width:148px;height:47px;margin-right:18px;padding-left:18px">基本信</arch-cell>
                        <arch-cell data-g style="width:148px;height:47px;margin-right:18px"></arch-cell>
                        <arch-cell data-g style="width:149px;height:47px"></arch-cell>
                        <arch-cell data-g style="width:148px;margin-right:12px;padding-top:2px">底部按钮模块</arch-cell>
                        <arch-cell data-g style="width:148px;margin-right:18px;padding:2px 0 0 96px">模块</arch-cell>
                        <arch-cell data-g style="width:148px;margin-right:18px"></arch-cell>
                        <arch-cell data-g style="width:149px;justify-content:space-between;padding:2px 21px 0 21px"><span>出价</span><span>块</span></arch-cell>
                    </arch-layer>
                    <div class="ups">
                        <up-arrow style="margin-left:165px"></up-arrow>
                        <up-arrow style="margin-left:223px"></up-arrow>
                        <div class="proto" style="margin-left:137px">协议</div>
                        <up-arrow style="margin-left:38px"></up-arrow>
                    </div>
                    <arch-layer h="92">
                        <span slot="label">基础模块</span>
                        <arch-cell class="tl" style="width:149px;margin:0 12px 0 1px;padding-left:68px">卡</arch-cell>
                        <arch-cell class="tl" style="width:149px;margin-right:14px"></arch-cell>
                        <arch-cell class="tl" style="width:148px;margin-right:18px"></arch-cell>
                        <arch-cell class="tl" style="width:149px"></arch-cell>
                    </arch-layer>
                    <arch-layer h="65" style="margin-top:16px">
                        <span slot="label">状态管</span>
                        <arch-cell class="sl" style="width:641px;height:47px;padding-top:10px;color:#eef1f6">状态管理</arch-cell>
                    </arch-layer>
                    <arch-layer h="82" style="margin-top:16px">
                        <span slot="label">业务支</span>
                        <arch-cell class="pl" style="width:215px;margin-right:17px;padding-left:6px">Tex 1.0</arch-cell>
                        <arch-cell class="pl" style="width:196px;margin-right:17px">TypeScript</arch-cell>
                        <arch-cell class="pl" style="width:196px;padding-left:42px;margin-top:-2px">自动化测试</arch-cell>
                    </arch-layer>
                    <arch-layer h="83" style="margin-top:22px">
                        <arch-cell class="nv" style="width:641px;margin-left:1px;justify-content:flex-start;padding:4px 0 0 423px;font-size:20px">xx</arch-cell>
                    </arch-layer>
                </div>
                <div class="col r">
                    <side-note style="margin-top:109px;border-color:#d3d4d4;padding:5px 0 0 49px">on</side-note>
                    <flow-arrow dir="left" style="margin:8px 0 0 1px"></flow-arrow>
                    <side-note style="margin:161px 0 0 6px;width:90px;padding:1px 0 0 15px;line-height:26px;font-size:18px">A<br><span style="padding-left:13px">Log</span></side-note>
                    <flow-arrow dir="left" style="margin:6px 0 0 1px"></flow-arrow>
                </div>
                <div class="bar"><div style="padding-left:54px">理</div><div style="padding-left:9px">点</div></div>
            </div>`;
    }
}

class DrawCanvas extends HTMLElement {
    constructor() {
        super();
        this._shadowRoot = this.attachShadow({ mode: 'open' });
    }

    connectedCallback() {
        this._shadowRoot.innerHTML = `
            <style>
                :host { display: block; position: relative; flex: 1; background: #fff; overflow: hidden; box-sizing: border-box; padding: 229px 0 0 193px; }
            </style>
            <arch-diagram></arch-diagram>
            <mosaic-layer></mosaic-layer>`;
    }
}

class AppWindow extends HTMLElement {
    constructor() {
        super();
        this._shadowRoot = this.attachShadow({ mode: 'open' });
    }

    connectedCallback() {
        this._shadowRoot.innerHTML = `
            <style>
                :host { display: flex; flex-direction: column; width: 2078px; height: 1462px; overflow: hidden; }
                .main { display: flex; flex: 1; min-height: 0; }
            </style>
            <app-toolbar></app-toolbar>
            <format-bar></format-bar>
            <ruler-row></ruler-row>
            <div class="main">
                <layer-panel></layer-panel>
                <side-ruler></side-ruler>
                <draw-canvas></draw-canvas>
            </div>`;
    }
}

customElements.define('tool-group', ToolGroup);
customElements.define('tool-button', ToolButton);
customElements.define('app-toolbar', AppToolbar);
customElements.define('num-field', NumField);
customElements.define('format-bar', FormatBar);
customElements.define('ruler-row', RulerRow);
customElements.define('layer-row', LayerRow);
customElements.define('layer-panel', LayerPanel);
customElements.define('side-ruler', SideRuler);
customElements.define('doc-card', DocCard);
customElements.define('side-note', SideNote);
customElements.define('flow-arrow', FlowArrow);
customElements.define('up-arrow', UpArrow);
customElements.define('arch-layer', ArchLayer);
customElements.define('arch-cell', ArchCell);
customElements.define('mosaic-layer', MosaicLayer);
customElements.define('arch-diagram', ArchDiagram);
customElements.define('draw-canvas', DrawCanvas);
customElements.define('app-window', AppWindow);
</script>
</body>
</html>
